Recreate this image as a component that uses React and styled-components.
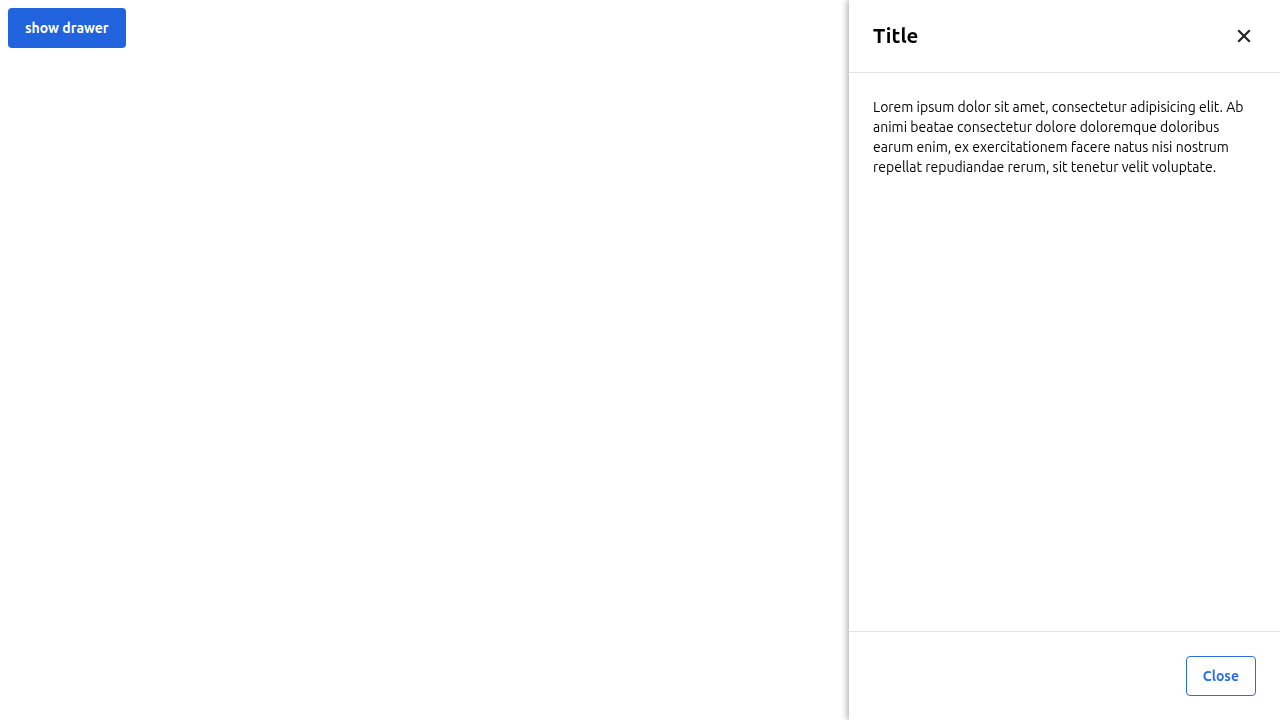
import React from 'react'
import styled, { createGlobalStyle } from 'styled-components'

const GlobalStyle = createGlobalStyle`
  body {
    margin: 0;
    font-family: Ubuntu, "Noto Sans", "Open Sans", sans-serif;
    color: #000;
    background: #fff;
  }
`

const Page = styled.div`
  padding: 8px;
  min-height: 100vh;
  box-sizing: border-box;
`

const PrimaryButton = styled.button`
  height: 40px;
  padding: 0 17px;
  border: none;
  border-radius: 4px;
  background-color: #2163dc;
  color: #fff;
  font-family: inherit;
  font-size: 14px;
  font-weight: 700;
  cursor: pointer;
`

const Drawer = styled.aside`
  position: fixed;
  top: 0;
  right: 0;
  width: 431px;
  height: 100vh;
  display: flex;
  flex-direction: column;
  background: #fff;
  box-shadow: -2px 0 6px rgba(0, 0, 0, 0.3);
`

const Header = styled.header`
  height: 73px;
  box-sizing: border-box;
  padding: 0 24px 1px;
  display: flex;
  align-items: center;
  justify-content: space-between;
  border-bottom: 1px solid #e2e2e2;
`

const Title = styled.h2`
  margin: 0;
  font-size: 20.5px;
  line-height: 24px;
  font-weight: 700;
`

const IconButton = styled.button`
  width: 24px;
  height: 24px;
  padding: 0;
  border: none;
  background: transparent;
  display: flex;
  align-items: center;
  justify-content: center;
  color: #222;
  cursor: pointer;
`

const Body = styled.div`
  flex: 1;
  padding: 24px;
  font-size: 14px;
  line-height: 20px;
`

const Footer = styled.footer`
  height: 89px;
  box-sizing: border-box;
  padding: 24px;
  display: flex;
  justify-content: flex-end;
  border-top: 1px solid #e2e2e2;
`

const OutlineButton = styled.button`
  height: 40px;
  padding: 0 16px;
  border: 1px solid #2b6de8;
  border-radius: 4px;
  background: #fff;
  color: #2b6de8;
  font-family: inherit;
  font-size: 14px;
  font-weight: 700;
  cursor: pointer;
`

const App = () => {
  return (
    <>
      <GlobalStyle />
      <Page>
        <PrimaryButton>show drawer</PrimaryButton>
      </Page>
      <Drawer>
        <Header>
          <Title>Title</Title>
          <IconButton aria-label="close">
            <svg width="14" height="14" viewBox="0 0 14 14">
              <path d="M2 2L12 12M12 2L2 12" stroke="currentColor" strokeWidth="2.2" strokeLinecap="square" />
            </svg>
          </IconButton>
        </Header>
        <Body>
          Lorem ipsum dolor sit amet, consectetur adipisicing elit. Ab animi beatae consectetur dolore doloremque doloribus earum enim, ex exercitationem facere natus nisi nostrum repellat repudiandae rerum, sit tenetur velit voluptate.
        </Body>
        <Footer>
          <OutlineButton>Close</OutlineButton>
        </Footer>
      </Drawer>
    </>
  )
}

export default App
